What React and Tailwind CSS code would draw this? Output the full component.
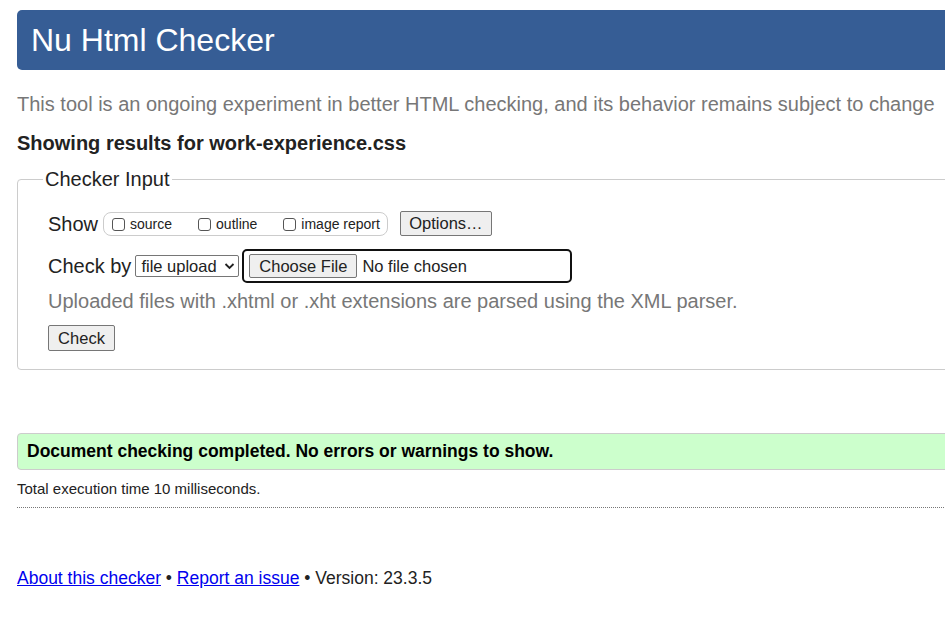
import React from "react";

function Box({ label }) {
  return (
    <label className="inline-flex items-center">
      <span className="mr-[5px] inline-block h-[13px] w-[13px] rounded-[3px] border border-[#555] bg-white" />
      <span className="text-[14px] leading-none">{label}</span>
    </label>
  );
}

export default function App() {
  return (
    <div className="h-[625px] w-[945px] overflow-hidden bg-white text-[#222] font-['Liberation_Sans',Arial,sans-serif]">
      <div className="w-[1000px] pl-[17px] pt-[10px]">
        <header className="flex h-[60px] items-center rounded-[5px] bg-[#365d95] pl-[14px]">
          <h1 className="text-[32px] leading-none text-white">Nu Html Checker</h1>
        </header>

        <p className="mt-[22px] text-[20px] leading-[24px] text-[#777]">
          This tool is an ongoing experiment in better HTML checking, and its behavior remains subject to change
        </p>
        <p className="mt-[15px] text-[20px] font-bold leading-[24px]">
          Showing results for work-experience.css
        </p>

        <fieldset className="mt-[12px] h-[203px] rounded-[4px] border border-[#ccc] pl-[30px] pr-0">
          <legend className="-ml-[5px] px-[2px] text-[20px] leading-[24px]">Checker Input</legend>

          <div className="mt-[20px] flex items-center">
            <span className="text-[20px] leading-none">Show</span>
            <div className="ml-[5px] flex h-[24px] items-center gap-[26px] rounded-[8px] border border-[#ccc] pl-[8px] pr-[7px] pt-[1px]">
              <Box label="source" />
              <Box label="outline" />
              <Box label="image report" />
            </div>
            <button className="ml-[12px] h-[25px] w-[92px] rounded-[2px] border border-[#767676] bg-[#efefef] text-[16.5px] leading-none">
              Options…
            </button>
          </div>

          <div className="mt-[13px] flex items-center">
            <span className="text-[20px] leading-none">Check by</span>
            <div className="ml-[4px] flex h-[22px] w-[104px] items-center justify-between rounded-[2px] border border-[#767676] bg-white pl-[5px] pr-[3px]">
              <span className="text-[16.5px] leading-none">file upload</span>
              <svg width="11" height="8" viewBox="0 0 11 8">
                <path d="M1.5 2l4 4 4-4" fill="none" stroke="#222" strokeWidth="1.8" />
              </svg>
            </div>
            <div className="ml-[3px] flex h-[34px] w-[330px] items-center rounded-[5px] border-[2px] border-[#111] pl-[5px]">
              <span className="flex h-[24px] w-[108px] items-center justify-center rounded-[2px] border border-[#767676] bg-[#efefef] text-[16.5px] leading-none">
                Choose File
              </span>
              <span className="ml-[5px] text-[16.5px] leading-none">No file chosen</span>
            </div>
          </div>

          <p className="mt-[6px] text-[20px] leading-[24px] text-[#777]">
            Uploaded files with .xhtml or .xht extensions are parsed using the XML parser.
          </p>
          <button className="mt-[12px] h-[26px] w-[67px] rounded-[2px] border border-[#767676] bg-[#efefef] text-[16.5px] leading-none">
            Check
          </button>
        </fieldset>

        <div className="mt-[63px] flex h-[37px] items-center rounded-[4px] border border-[#ccc] bg-[#ccffcc] pl-[9px]">
          <p className="text-[17.5px] font-bold leading-none text-black">
            Document checking completed. No errors or warnings to show.
          </p>
        </div>
        <p className="mt-[11px] text-[15px] leading-[16px]">Total execution time 10 milliseconds.</p>
        <hr className="mt-[10px] border-0 border-t border-dotted border-[#777]" />

        <p className="mt-[59px] text-[17.5px] leading-[22px]">
          <a href="#" className="text-[#0000ee] underline">About this checker</a>
          {" • "}
          <a href="#" className="text-[#0000ee] underline">Report an issue</a>
          {" • Version: 23.3.5"}
        </p>
      </div>
    </div>
  );
}
